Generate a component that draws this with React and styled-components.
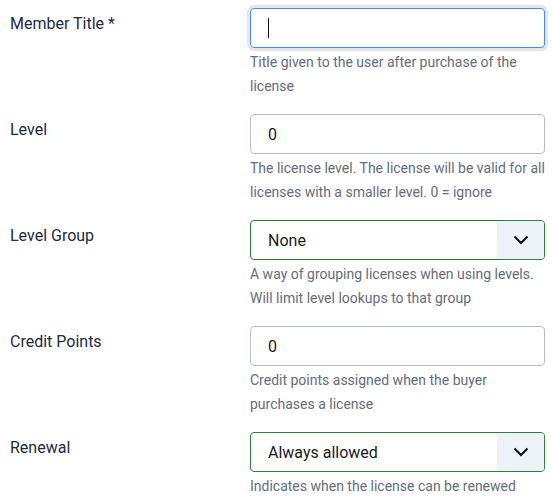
import React from "react";
import styled, { createGlobalStyle } from "styled-components";

const Global = createGlobalStyle`
  html, body { margin: 0; padding: 0; background: #fff; }
  body { font-family: Roboto, "Noto Sans", "Liberation Sans", sans-serif; }
  * { box-sizing: border-box; }
`;

const Form = styled.div`
  padding: 8px 8px 0 10px;
  display: flex;
  flex-direction: column;
  gap: 16px;
`;

const Row = styled.div`
  display: grid;
  grid-template-columns: 240px 1fr;
`;

const Label = styled.label`
  padding-top: 4px;
  font-size: 16px;
  line-height: 24px;
  color: #1d2a42;
`;

const Controls = styled.div`
  display: flex;
  flex-direction: column;
`;

const Input = styled.div`
  height: 40px;
  border: 1px solid ${(p) => (p.$focus ? "#3d8ef0" : "#b4bfd0")};
  border-radius: 4px;
  box-shadow: ${(p) => (p.$focus ? "0 0 0 3px #e6e6e6" : "none")};
  display: flex;
  align-items: center;
  padding: 0 16px 0 17px;
  font-size: 16px;
  color: #1a1a1a;
`;

const Caret = styled.span`
  width: 1px;
  height: 20px;
  background: #111;
`;

const Select = styled.div`
  height: 40px;
  border: 1px solid #2f7e3d;
  border-radius: 4px;
  display: flex;
  align-items: stretch;
  overflow: hidden;
  font-size: 16px;
  color: #1a1a1a;
`;

const SelectValue = styled.span`
  flex: 1;
  display: flex;
  align-items: center;
  padding-left: 17px;
`;

const Chevron = styled.span`
  width: 47px;
  background: #eef3fa;
  display: flex;
  align-items: center;
  justify-content: center;
`;

const Help = styled.div`
  margin-top: 2px;
  font-size: 14px;
  line-height: 24px;
  color: #656d78;
`;

const fields = [
  { label: "Member Title *", type: "focus", help: "Title given to the user after purchase of the license" },
  { label: "Level", type: "input", value: "0", help: "The license level. The license will be valid for all licenses with a smaller level. 0 = ignore" },
  { label: "Level Group", type: "select", value: "None", help: "A way of grouping licenses when using levels. Will limit level lookups to that group" },
  { label: "Credit Points", type: "input", value: "0", help: "Credit points assigned when the buyer purchases a license" },
  { label: "Renewal", type: "select", value: "Always allowed", help: "Indicates when the license can be renewed" },
];

export default function App() {
  return (
    <>
      <Global />
      <Form>
        {fields.map((f) => (
          <Row key={f.label}>
            <Label>{f.label}</Label>
            <Controls>
              {f.type === "select" ? (
                <Select>
                  <SelectValue>{f.value}</SelectValue>
                  <Chevron>
                    <svg width="16" height="10" viewBox="0 0 16 10">
                      <path d="M1.5 1.5 L8 8 L14.5 1.5" fill="none" stroke="#111" strokeWidth="2" />
                    </svg>
                  </Chevron>
                </Select>
              ) : f.type === "focus" ? (
                <Input $focus>
                  <Caret />
                </Input>
              ) : (
                <Input>{f.value}</Input>
              )}
              <Help>{f.help}</Help>
            </Controls>
          </Row>
        ))}
      </Form>
    </>
  );
}
